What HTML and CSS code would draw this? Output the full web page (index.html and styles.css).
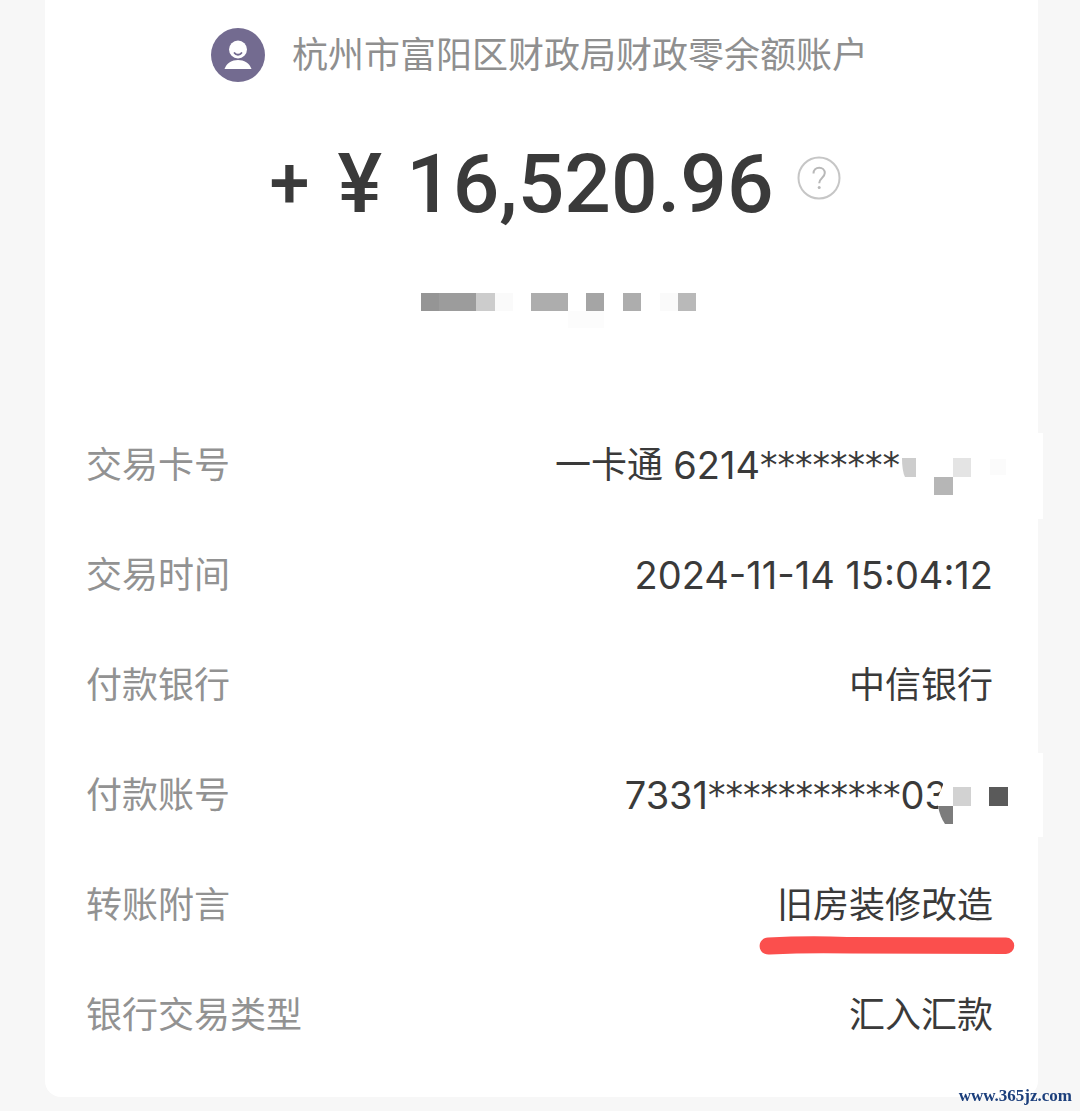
FILE: index.html
```html
<!DOCTYPE html>
<html lang="zh-CN">
<head>
    <meta charset="UTF-8">
    <meta name="viewport" content="width=device-width, initial-scale=1.0">
    <title>交易详情</title>
    <link rel="stylesheet" href="styles.css">
</head>
<body>
    <main class="card">
        <header class="payer">
            <svg class="avatar" viewBox="0 0 54 54" aria-hidden="true">
                <circle cx="27" cy="27" r="27" fill="#736b90"/>
                <circle cx="27" cy="21.500" r="9" fill="#fff"/>
                <path d="M13.500 41c2-6 7.500-9 13.500-9s11.500 3 13.500 9z" fill="#fff"/>
                <path d="M23.500 25c1.500 2.300 5.500 2.300 7 0" fill="none" stroke="#736b90" stroke-width="1.800" stroke-linecap="round"/>
            </svg>
            <span>杭州市富阳区财政局财政零余额账户</span>
        </header>

        <div class="amount">
            <span class="sign">+</span>
            <span class="yen">¥</span>
            <span class="number">16,520.96</span>
            <button type="button" class="help" aria-label="帮助">
                <svg viewBox="0 0 44 44" aria-hidden="true">
                    <circle cx="22" cy="22" r="20.500" fill="none" stroke="#c6c6c6" stroke-width="2"/>
                    <path d="M16.500 17.500c0-3.500 2.500-5.700 5.700-5.700s5.600 2.200 5.600 5.300c0 4.500-5.600 4.800-5.600 10.200" fill="none" stroke="#b8b8b8" stroke-width="2"/>
                    <circle cx="22.200" cy="31.500" r="1.500" fill="#b8b8b8"/>
                </svg>
            </button>
        </div>

        <!-- 打码 -->
        <svg class="mask" viewBox="0 0 276 50" aria-hidden="true">
            <path d="M0 15h55v18H0z" fill="#9c9c9c"/>
            <path d="M0 15h18v18H0z" fill="#959595"/>
            <path d="M55 15h19v18H55z" fill="#cccccc"/>
            <path d="M74 15h18v18H74z" fill="#fafafa"/>
            <path d="M110 15h37v18h-37z" fill="#adadad"/>
            <path d="M147 33h36v17h-36z" fill="#fcfcfc"/>
            <path d="M165 15h18v18h-18z" fill="#a5a5a5"/>
            <path d="M202 15h18v18h-18z" fill="#adadad"/>
            <path d="M239 15h18v18h-18z" fill="#fafafa"/>
            <path d="M257 15h18v18h-18z" fill="#b9b9b9"/>
        </svg>

        <dl class="list">
            <div class="row">
                <dt>交易卡号</dt>
                <dd>一卡通 <span class="digits">6214</span><span class="stars">********</span><svg class="mask-card" viewBox="0 0 143 86" aria-hidden="true">
                    <path d="M3 0h140v86H3z" fill="#fff"/>
                    <path d="M2 25h14v19H5Q2 38 2 25z" fill="#cdcdcd"/>
                    <path d="M53 25h18v19H53z" fill="#e4e4e4"/>
                    <path d="M34 44h19v18H34z" fill="#b6b6b6"/>
                    <path d="M90 26h16v16H90z" fill="#fbfbfb"/>
                </svg></dd>
            </div>
            <div class="row">
                <dt>交易时间</dt>
                <dd class="digits">2024-11-14 15:04:12</dd>
            </div>
            <div class="row">
                <dt>付款银行</dt>
                <dd>中信银行</dd>
            </div>
            <div class="row">
                <dt>付款账号</dt>
                <dd><span class="digits">7331</span><span class="stars">***********</span><span class="digits">03</span><svg class="mask-account" viewBox="0 0 107 84" aria-hidden="true">
                    <path d="M9 0h98v84H9L2 54V44L7 32z" fill="#fff"/>
                    <path d="M2 53h15v18H9Q4 64 2 53z" fill="#7c7c7c"/>
                    <path d="M17 34h18v19H17z" fill="#d2d2d2"/>
                    <path d="M53 34h19v19H53z" fill="#5a5a5a"/>
                </svg></dd>
            </div>
            <div class="row">
                <dt>转账附言</dt>
                <dd class="marked">旧房装修改造<svg class="red-line" viewBox="0 0 256 20" aria-hidden="true">
                    <path d="M9 1.500Q50-.5 88 1L247 1.500a8 8 0 0 1 0 16.500L92 17.500Q50 16.500 11 18.500C-2 20-3 2 9 1.500z" fill="#fb4f4d"/>
                </svg></dd>
            </div>
            <div class="row">
                <dt>银行交易类型</dt>
                <dd>汇入汇款</dd>
            </div>
        </dl>
    </main>
    <div class="watermark">www.365jz.com</div>
</body>
</html>
```

FILE: styles.css
```css
* {
    box-sizing: border-box;
}
body {
    margin: 0;
    background-color: #f7f7f7;
    color: #3a3a3a;
    font-family: Inter, "Noto Sans CJK SC", sans-serif;
    font-size: 36px;
    line-height: 54px;
}
.card {
    margin: 0 42px 14px 45px;
    padding: 28px 45px 27px 41px;
    border-radius: 0 0 16px 16px;
    background-color: #fff;
}
.payer {
    display: flex;
    align-items: center;
    justify-content: center;
    gap: 27px;
    color: #8f8f8f;
}
.avatar {
    flex: none;
    width: 54px;
    height: 54px;
}
.amount {
    display: flex;
    align-items: center;
    justify-content: center;
    margin-top: 53px;
    padding-left: 32px;
    font-family: Roboto, sans-serif;
    font-size: 84px;
    font-weight: 500;
    line-height: 98px;
    white-space: nowrap;
}
.sign {
    font-size: 72px;
}
.yen {
    margin-left: 28px;
}
.number {
    margin-left: 24px;
    font-size: 82px;
}
.help {
    align-self: flex-start;
    width: 44px;
    height: 44px;
    margin-top: 21px;
    margin-left: 24px;
    padding: 0;
    border: 0;
    background: none;
}
.help svg {
    display: block;
}
.mask {
    display: block;
    width: 276px;
    height: 50px;
    margin: 45px auto 0;
    position: relative;
    left: 19px;
}
.list {
    margin: 82px 0 0;
}
.row {
    display: flex;
    align-items: center;
    justify-content: space-between;
    height: 110px;
}
dt {
    color: #929292;
}
dd {
    display: flex;
    align-items: center;
    margin: 0;
    white-space: pre;
}
.digits {
    font-size: 38px;
}
.stars {
    font-family: "DejaVu Sans", sans-serif;
    font-size: 35px;
}
.mask-card {
    width: 143px;
    height: 86px;
    margin-top: 22px;
    margin-right: -50px;
}
.mask-account {
    width: 107px;
    height: 84px;
    margin-left: -12px;
    margin-right: -50px;
}
.marked {
    position: relative;
}
.red-line {
    position: absolute;
    right: -22px;
    top: 58px;
    width: 256px;
    height: 20px;
}
.watermark {
    position: fixed;
    right: 8px;
    bottom: 4px;
    color: #1c3f7c;
    font-family: "Liberation Serif", serif;
    font-size: 17px;
    font-weight: bold;
    line-height: 22px;
}
```
